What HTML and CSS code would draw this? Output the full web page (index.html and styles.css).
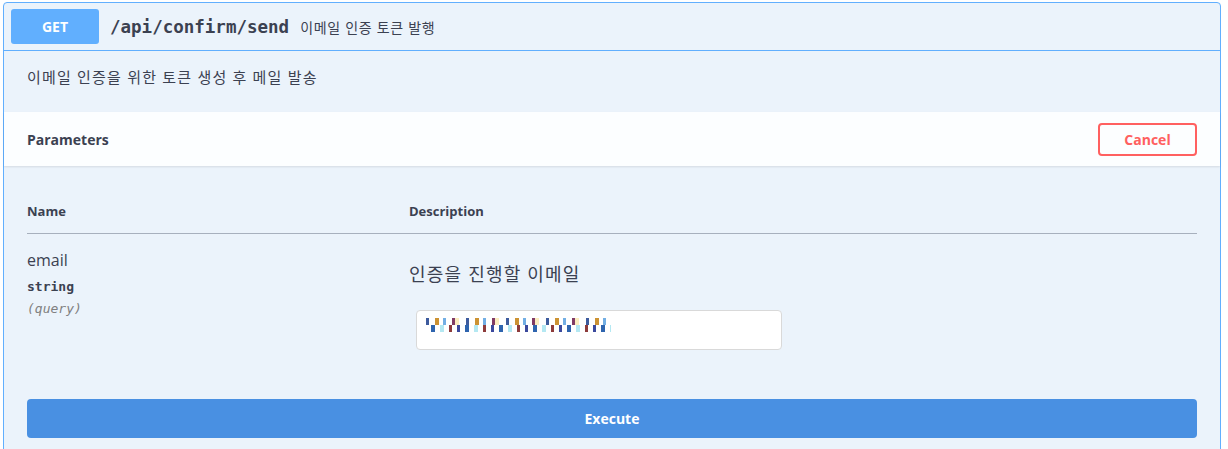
FILE: index.html
```html
<!DOCTYPE html>
<html lang="ko">
  <head>
    <meta charset="UTF-8" />
    <meta name="viewport" content="width=device-width, initial-scale=1.0" />
    <title>Swagger UI</title>
    <link rel="stylesheet" href="styles.css">
  </head>
  <body>
    <div class="opblock">
      <div class="opblock-summary">
        <span class="method">GET</span>
        <span class="path">/api/confirm/send</span>
        <span class="summary">이메일 인증 토큰 발행</span>
      </div>

      <div class="opblock-desc">이메일 인증을 위한 토큰 생성 후 메일 발송</div>

      <div class="section-header">
        <h4>Parameters</h4>
        <button class="cancel-btn">Cancel</button>
      </div>

      <div class="params">
        <table>
          <tr>
            <th class="col-name">Name</th>
            <th>Description</th>
          </tr>
          <tr>
            <td class="col-name">
              <div class="param-name">email</div>
              <div class="param-type">string</div>
              <div class="param-in">(query)</div>
            </td>
            <td>
              <p class="param-desc">인증을 진행할 이메일</p>
              <div class="input-wrap">
                <input type="text" class="input-field" value="" />
                <span class="blur"></span>
              </div>
            </td>
          </tr>
        </table>
      </div>

      <div class="execute-wrap">
        <button class="execute-btn">Execute</button>
      </div>
    </div>
  </body>
</html>
```

FILE: styles.css
```css
body {
  margin: 0;
  background-color: #ffffff;
  font-family: "Open Sans", "Noto Sans CJK KR", sans-serif;
  color: #3b4151;
}

.opblock {
  margin: 2px 7px 0 3px;
  border: 1px solid #61affe;
  border-radius: 4px;
  background-color: #ebf3fb;
  height: 460px;
}

.opblock-summary {
  display: flex;
  align-items: center;
  height: 47px;
  padding: 0 7px;
  border-bottom: 1px solid #61affe;
}

.method {
  width: 88px;
  height: 35px;
  line-height: 35px;
  text-align: center;
  background-color: #61affe;
  color: #ffffff;
  border-radius: 3px;
  font-size: 14px;
  font-weight: 700;
}

.path {
  margin-left: 11px;
  font-family: "DejaVu Sans Mono", monospace;
  font-size: 17.5px;
  font-weight: 700;
  color: #3b4151;
}

.summary {
  margin-left: 11px;
  font-size: 14px;
  letter-spacing: 0.7px;
  color: #3b4151;
}

.opblock-desc {
  padding: 15px 23px 0;
  height: 46px;
  font-size: 15px;
  letter-spacing: 1.2px;
}

.section-header {
  display: flex;
  align-items: center;
  justify-content: space-between;
  height: 54px;
  padding: 0 23px;
  background-color: rgba(255, 255, 255, 0.85);
  box-shadow: 0 1px 2px rgba(0, 0, 0, 0.1);
}

.section-header h4 {
  margin: 0;
  font-size: 14px;
  font-weight: 700;
}

.cancel-btn {
  width: 99px;
  height: 33px;
  background: transparent;
  border: 2px solid #ff6060;
  border-radius: 4px;
  color: #ff6060;
  font-family: inherit;
  font-size: 14px;
  font-weight: 700;
}

.params {
  padding: 30px 23px 0;
}

table {
  width: 100%;
  border-collapse: collapse;
}

th {
  text-align: left;
  font-size: 13px;
  font-weight: 700;
  padding: 6px 0 13px;
  border-bottom: 1px solid #a7b0bd;
}

.col-name {
  width: 382px;
}

td {
  vertical-align: top;
  padding: 14px 0 0;
}

.param-name {
  font-size: 16px;
  line-height: 24px;
}

.param-type {
  margin-top: 5px;
  font-family: "DejaVu Sans Mono", monospace;
  font-size: 13px;
  font-weight: 600;
  line-height: 20px;
}

.param-in {
  margin-top: 2px;
  font-family: "DejaVu Sans Mono", monospace;
  font-size: 13px;
  font-style: italic;
  color: #808080;
  line-height: 20px;
}

.param-desc {
  margin: 13px 0 0;
  font-size: 18px;
  letter-spacing: 1.2px;
  line-height: 26px;
}

.input-wrap {
  position: relative;
  margin: 23px 0 0 7px;
  width: 366px;
}

.input-field {
  box-sizing: border-box;
  width: 366px;
  height: 40px;
  border: 1px solid #d9d9d9;
  border-radius: 4px;
  background-color: #ffffff;
}

.blur {
  position: absolute;
  left: 10px;
  top: 8px;
  width: 185px;
  height: 14px;
  background:
    repeating-linear-gradient(90deg, #1c3f8c 0 3px, #ffffff 3px 9px, #c47f10 9px 13px, #ffffff 13px 17px, #5aa0e0 17px 20px, #ffffff 20px 26px, #6b1a4a 26px 29px, #fbe9b5 29px 33px, #ffffff 33px 40px) top / 100% 7px no-repeat,
    repeating-linear-gradient(90deg, #ffffff 0 5px, #0a4aa0 5px 9px, #ffffff 9px 14px, #a8e4f0 14px 18px, #ffffff 18px 23px, #7a1a1a 23px 26px, #ffffff 26px 31px, #1a2a8c 31px 34px) bottom / 100% 7px no-repeat;
  opacity: 0.85;
}

.execute-wrap {
  padding: 49px 23px 0;
}

.execute-btn {
  width: 100%;
  height: 39px;
  background-color: #4990e2;
  border: none;
  border-radius: 4px;
  color: #ffffff;
  font-family: inherit;
  font-size: 14px;
  font-weight: 700;
}
```
